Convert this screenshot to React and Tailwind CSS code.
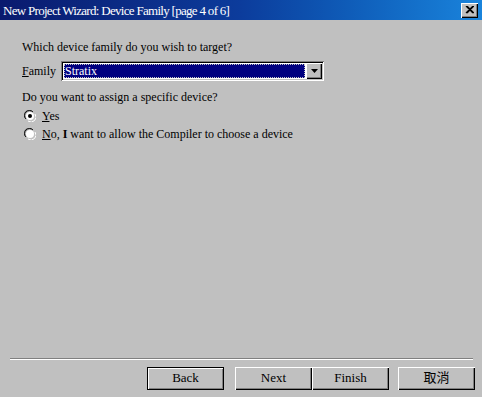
import React from 'react'

const Radio = ({ checked }) => (
  <span className="relative inline-block w-[12px] h-[12px] shrink-0">
    <svg width="12" height="12" viewBox="0 0 12 12" className="absolute inset-0">
      <path d="M1 8 A5 5 0 0 1 8 1" fill="none" stroke="#808080" strokeWidth="1" />
      <path d="M2 9 A4.2 4.2 0 0 1 9 2" fill="none" stroke="#000" strokeWidth="1" />
      <path d="M4 11 A5 5 0 0 0 11 4" fill="none" stroke="#fff" strokeWidth="1" />
      <circle cx="6" cy="6" r="4" fill="#fff" />
      {checked && <circle cx="6" cy="6" r="2" fill="#000" />}
    </svg>
  </span>
)

const Button = ({ children, isDefault }) => (
  <div
    className={`w-[77px] h-[23px] flex items-center justify-center text-[13px] text-black bg-[#c0c0c0] ${
      isDefault
        ? 'border border-black shadow-[inset_1px_1px_0_#fff,inset_-1px_-1px_0_#808080]'
        : 'shadow-[inset_1px_1px_0_#fff,inset_-1px_-1px_0_#000,inset_-2px_-2px_0_#808080]'
    }`}
  >
    {children}
  </div>
)

export default function App() {
  return (
    <div
      className="w-[482px] h-[397px] bg-[#c0c0c0] flex flex-col text-black"
      style={{ fontFamily: '"Liberation Serif", "Noto Sans CJK TC", serif' }}
    >
      <div className="h-[20px] flex items-center justify-between pl-[3px] pr-[3px] bg-gradient-to-r from-[#0a1a6e] via-[#0c3c9c] to-[#1a84dc]">
        <span className="text-white text-[13px] leading-none tracking-[-0.7px]">
          New Project Wizard: Device Family [page 4 of 6]
        </span>
        <div className="w-[17px] h-[15px] bg-[#c0c0c0] flex items-center justify-center shadow-[inset_1px_1px_0_#fff,inset_-1px_-1px_0_#000,inset_-2px_-2px_0_#808080] mr-[1px]">
          <svg width="9" height="8" viewBox="0 0 9 8">
            <path d="M1 0 L8 7 M2 0 L9 7 M8 0 L1 7 M9 0 L2 7" stroke="#000" strokeWidth="1.2" />
          </svg>
        </div>
      </div>

      <div className="flex-1 flex flex-col pl-[22px] pt-[20px] text-[12px]">
        <div className="h-[14px] leading-[14px]">Which device family do you wish to target?</div>

        <div className="flex items-center mt-[7px]">
          <span className="w-[39px]">
            <span className="underline">F</span>amily
          </span>
          <div className="w-[263px] h-[20px] bg-white flex items-stretch p-[2px] shadow-[inset_1px_1px_0_#808080,inset_-1px_-1px_0_#fff,inset_2px_2px_0_#000,inset_-2px_-2px_0_#c0c0c0]">
            <div className="flex-1 m-[1px] bg-[#000080] text-white flex items-center pl-[1px] outline outline-1 outline-dotted outline-[#c0c0c0] -outline-offset-1">
              Stratix
            </div>
            <div className="w-[16px] bg-[#c0c0c0] flex items-center justify-center shadow-[inset_1px_1px_0_#fff,inset_-1px_-1px_0_#000,inset_-2px_-2px_0_#808080]">
              <svg width="7" height="4" viewBox="0 0 7 4">
                <path d="M0 0 H7 L3.5 4 Z" fill="#000" />
              </svg>
            </div>
          </div>
        </div>

        <div className="mt-[9px] h-[14px] leading-[14px]">Do you want to assign a specific device?</div>

        <div className="flex items-center gap-[6px] mt-[5px] pl-[2px] h-[14px]">
          <Radio checked />
          <span>
            <span className="underline">Y</span>es
          </span>
        </div>
        <div className="flex items-center gap-[6px] mt-[4px] pl-[2px] h-[14px]">
          <Radio />
          <span>
            <span className="underline">N</span>o, <span className="font-bold">I</span> want to allow the Compiler to choose a device
          </span>
        </div>
      </div>

      <div className="mx-[10px] w-[463px] border-t border-[#808080] border-b border-b-white" />

      <div className="flex justify-end items-center h-[37px] pr-[7px] pb-[1px]">
        <Button isDefault>Back</Button>
        <div className="ml-[11px]">
          <Button>Next</Button>
        </div>
        <Button>Finish</Button>
        <div className="ml-[9px]">
          <Button>取消</Button>
        </div>
      </div>
    </div>
  )
}
